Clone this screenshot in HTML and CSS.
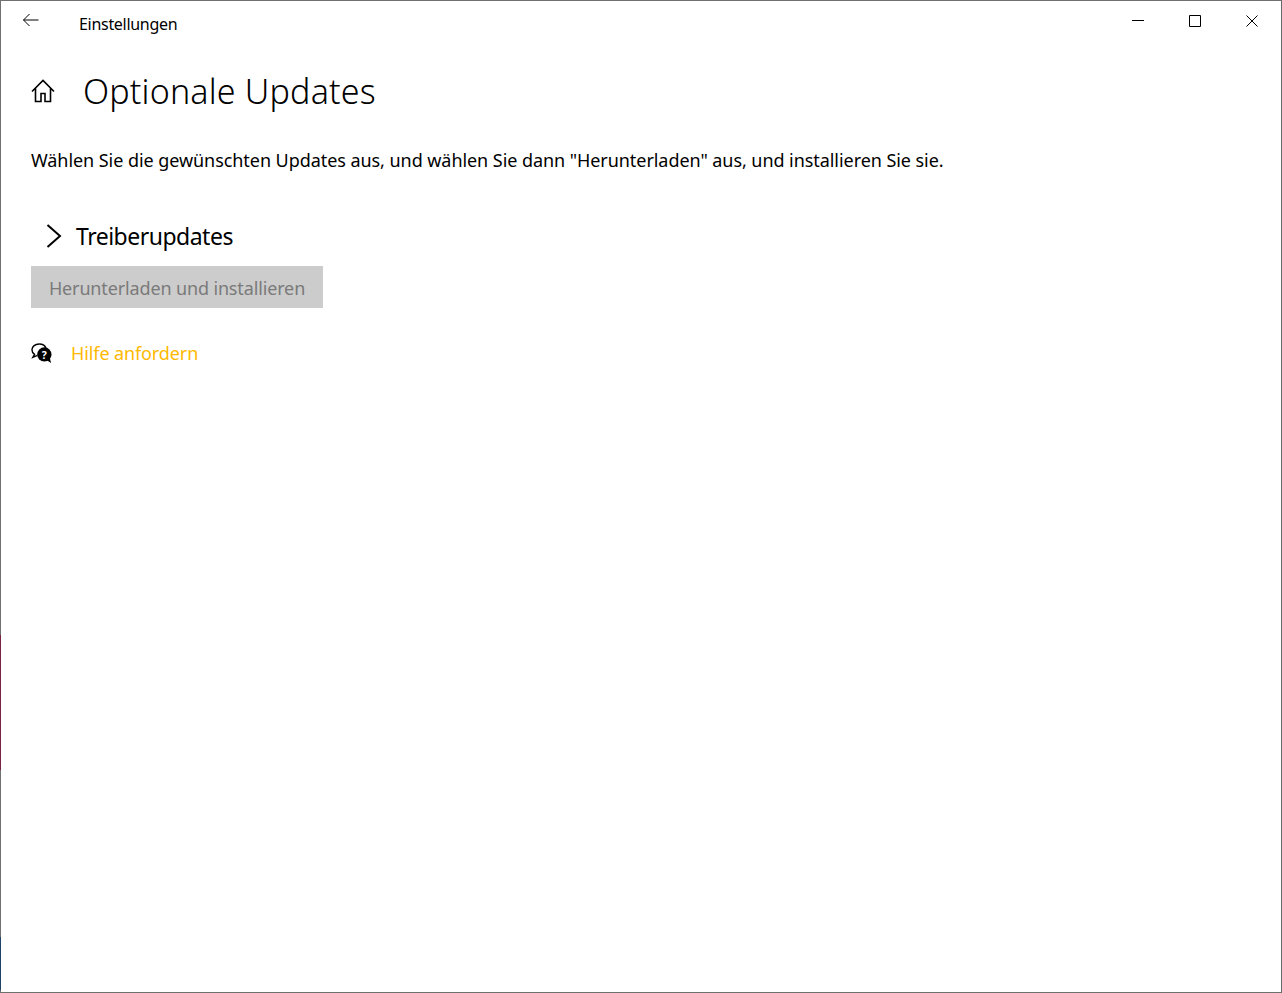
FILE: index.html
```html
<!DOCTYPE html>
<html lang="de">
<head>
<meta charset="utf-8">
<title>Einstellungen</title>
<link rel="stylesheet" href="styles.css">
</head>
<body>
<div class="window">
  <span class="edge edge-red"></span>
  <span class="edge edge-blue"></span>
  <header class="titlebar">
    <svg class="back" width="17" height="14" viewBox="0 0 17 14"><path d="M7.500 1 1.500 7l6 6M1.500 7h15" fill="none" stroke="#000" stroke-width="1"/></svg>
    <span class="app-name">Einstellungen</span>
    <div class="controls">
      <svg width="12" height="12" viewBox="0 0 12 12"><path d="M0 5.500h12" stroke="#000" fill="none"/></svg>
      <svg width="12" height="12" viewBox="0 0 12 12"><path d="M.5.5h11v11H.5z" stroke="#000" fill="none"/></svg>
      <svg width="12" height="12" viewBox="0 0 12 12"><path d="m.5.5 11 11M11.500.5l-11 11" stroke="#000" fill="none"/></svg>
    </div>
  </header>
  <main class="content">
    <div class="heading">
      <svg class="home" width="24" height="24" viewBox="0 0 24 24"><path d="M1 12.500 12 1.500l11 11M4.500 9.500V22.500h5.500v-8h4v8h5.500V9.500" fill="none" stroke="#000" stroke-width="1.600"/></svg>
      <h1>Optionale Updates</h1>
    </div>
    <p class="intro">Wählen Sie die gewünschten Updates aus, und wählen Sie dann "Herunterladen" aus, und installieren Sie sie.</p>
    <div class="group">
      <svg class="chevron" width="16" height="24" viewBox="0 0 16 24"><path d="M1.500 1 14 12 1.500 23" fill="none" stroke="#000" stroke-width="2"/></svg>
      <h2>Treiberupdates</h2>
    </div>
    <button class="action" disabled>Herunterladen und installieren</button>
    <div class="help">
      <svg width="21" height="21" viewBox="0 0 22 22"><path d="M8.500 1C4.400 1 1 3.700 1 7.200c0 2 1 3.600 2.700 4.800L2 15l4.800-2" fill="#fff" stroke="#000" stroke-width="1.500"/><path d="M8.500 1c3.500 0 6.500 2 7.300 4.800" fill="none" stroke="#000" stroke-width="1.500"/><circle cx="14" cy="12" r="7.500" fill="#000"/><path d="m16.500 18 4.500 3-1.500-6z" fill="#000"/><text x="14" y="16.500" class="q">?</text></svg>
      <a href="#">Hilfe anfordern</a>
    </div>
  </main>
</div>
</body>
</html>
```

FILE: styles.css
```css
* { box-sizing: border-box; }
html, body { margin: 0; height: 100%; }
body { background: #fff; color: #000; font-family: "Noto Sans", "Open Sans", sans-serif; overflow: hidden; }
.window { position: relative; width: 1282px; height: 993px; border: 1px solid #707070; border-right-color: #6a6a6a; background: #fff; }
.edge { position: absolute; left: -1px; width: 1px; }
.edge-red { top: 634px; height: 135px; background: #7a2345; }
.edge-blue { top: 936px; height: 53px; background: #1f4468; }
.titlebar { display: flex; align-items: center; height: 44px; padding-left: 21px; }
.back { margin-top: -7px; }
.app-name { margin-left: 40px; margin-top: 2px; font-size: 16px; letter-spacing: -0.3px; }
.controls { margin-left: auto; margin-top: -5px; padding-right: 23px; display: flex; gap: 45px; }
.content { padding-left: 30px; }
.heading { display: flex; align-items: center; height: 48px; margin-top: 22px; }
.home { flex: none; }
h1 { margin: 0 0 0 28px; font-size: 34px; font-weight: 300; letter-spacing: 0.18px; line-height: 48px; }
.intro { margin: 32px 0 0; font-size: 18px; line-height: 26px; letter-spacing: -0.06px; white-space: nowrap; }
.group { display: flex; align-items: center; height: 36px; margin-top: 45px; padding-left: 15px; }
h2 { margin: 0 0 0 14px; font-size: 23px; font-weight: 400; letter-spacing: -0.5px; line-height: 36px; }
.action { display: block; width: 292px; height: 42px; margin-top: 12px; padding: 2px 0 0; border: 0; background: #cccccc; color: #7a7a7a; font: 18px "Noto Sans", sans-serif; letter-spacing: -0.14px; }
.help { display: flex; align-items: center; gap: 19px; margin-top: 32px; height: 26px; }
.help a { color: #ffb900; font-size: 18px; letter-spacing: -0.11px; text-decoration: none; }
.q { fill: #fff; font: 700 11px "Noto Sans", sans-serif; text-anchor: middle; }
```
